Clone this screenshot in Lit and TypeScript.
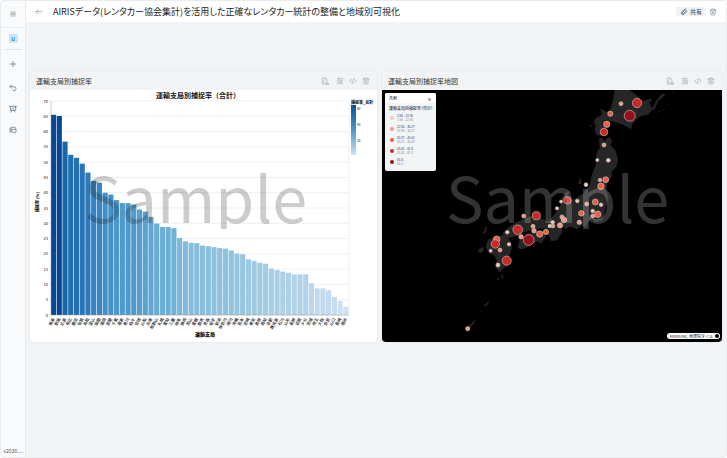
import { LitElement, html, svg, css } from "lit";
import { customElement } from "lit/decorators.js";

const FONT = css`"Noto Sans CJK JP", "Noto Sans", sans-serif`;

/* ---------- icons ---------- */
const glyphs = {
  menu: svg`<path d="M5 6h14M5 10h14M5 14h14M5 18h14"/>`,
  back: svg`<path d="M21 11H3M10 4l-7 7 7 7"/>`,
  plus: svg`<path d="M12 4v16M4 12h16"/>`,
  undo: svg`<path d="M8 3L3 8l5 5M3 8h12a6 6 0 0 1 0 12h-3"/>`,
  board: svg`<path d="M2 4h20M4 4v12h16V4M9 16l-3 5M15 16l3 5M8 12l3-3 2 2 3-3"/>`,
  chat: svg`<path d="M7 17H5l-2 2V9a5 5 0 0 1 5-5h8a5 5 0 0 1 5 5M9 10h10a2 2 0 0 1 2 2v5a2 2 0 0 1-2 2h-1v3l-4-3h-3a2 2 0 0 1-2-2zM6 8v4"/>`,
  link: svg`<path d="M20 11l-8 8a5 5 0 0 1-7-7l8-8a3.500 3.500 0 0 1 5 5l-8 8a1.500 1.500 0 0 1-3-3l7-7"/>`,
  trash: svg`<path d="M3 6h18M8 6V3h8v3M5 6l1 15h12l1-15M10 10v7M14 10v7"/>`,
  file: svg`<path d="M12 21H4V3h9l5 5v3M12 3v6M8 12v5M14 20l2-6h3l3 6zM14 21h8"/>`,
  list: svg`<path d="M4 5h16M4 10h16M4 15h16M4 20h16M9 3v4M15 13v4"/>`,
  code: svg`<path d="M7 7l-5 5 5 5M17 7l5 5-5 5M14 4l-4 16"/>`,
};
type Glyph = keyof typeof glyphs;
const icon = (name: Glyph) =>
  html`<svg class="icon" viewBox="0 0 24 24" aria-hidden="true">${glyphs[name]}</svg>`;

/* ---------- data ---------- */
const rates: [string, number][] = [
  ["徳島", 65.5], ["釧路", 65.1], ["広島", 56.7], ["帯広", 52.4], ["鹿児", 51.4], ["佐賀", 49.5],
  ["鳥取", 46.6], ["富山", 43.9], ["函館", 43.3], ["福岡", 40], ["室蘭", 39.4], ["千葉", 37.6],
  ["福島", 36.6], ["香川", 36.6], ["栃木", 36.1], ["宮城", 34.5], ["山梨", 33.8], ["兵庫", 32.1],
  ["和歌山", 29.9], ["札幌", 28.8], ["愛知", 28.8], ["三重", 28.4], ["岐阜", 25.2], ["静岡", 24.1],
  ["岡山", 23.6], ["愛媛", 23.5], ["群馬", 22.7], ["青森", 22.5], ["岩手", 22.2], ["新潟", 21.9],
  ["神奈川", 21.7], ["旭川", 21.1], ["沖縄", 20.1], ["熊本", 19.9], ["宮崎", 18.2], ["東京", 17.7],
  ["島根", 17.1], ["高知", 16.8], ["京都", 15.2], ["鹿児島", 14.7], ["石川", 14.2], ["山形", 13.8],
  ["長野", 13.3], ["滋賀", 13.3], ["大分", 13.3], ["茨城", 10.4], ["埼玉", 8.7], ["大阪", 8.7],
  ["奈良", 8.1], ["山口", 5.9], ["長崎", 4.6], ["福井", 2.7],
];

const ramp: [number, number[]][] = [
  [0, [214, 230, 244]], [10, [190, 216, 236]], [20, [150, 198, 224]], [28, [112, 177, 215]],
  [38, [74, 150, 201]], [47, [44, 122, 186]], [57, [23, 100, 171]], [65, [8, 72, 146]],
];
function shade(v: number) {
  for (let i = 1; i < ramp.length; i++) {
    const [hi, b] = ramp[i];
    const [lo, a] = ramp[i - 1];
    if (v <= hi) return `rgb(${a.map((c, k) => Math.round(c + ((b[k] - c) * (v - lo)) / (hi - lo))).join(",")})`;
  }
  return "rgb(8,72,146)";
}

/* x, y, radius, class index */
const spots: [number, number, number, number][] = [
  [621, 103.7, 2, 1], [637, 103, 4.7, 3], [629.7, 115.7, 5.5, 4], [610.3, 113.7, 2.6, 2], [606.7, 124.3, 3.2, 2],
  [604, 132, 3.8, 3], [604, 145, 2, 1], [597.3, 160, 1.5, 0], [608.3, 160.3, 1.9, 0], [600, 180, 1.8, 1],
  [605.7, 179.7, 3, 2], [601, 186.3, 3.3, 2], [586, 184.7, 1.9, 0], [567.3, 200.3, 3.8, 3], [561, 201.6, 1.5, 0],
  [577.3, 201, 1.8, 0], [586.7, 204, 2, 1], [595.3, 202, 3, 2], [601, 204.7, 1.8, 0], [581.3, 213.3, 2.8, 2],
  [592.7, 211, 1.8, 0], [592.7, 216, 2, 1], [597.7, 214.3, 3.3, 2], [579.3, 222.3, 2.2, 1], [557, 208.3, 1.6, 0],
  [523.7, 216, 2, 1], [536.3, 215.7, 4.1, 3], [552.7, 222.3, 1.8, 0], [549.7, 226, 1.7, 0], [553, 226, 1.9, 1],
  [562, 217, 2.1, 1], [564, 220, 2.8, 1], [560, 225.3, 2.6, 1], [533, 226.3, 2, 1], [534, 230.7, 2.3, 1],
  [539.7, 234, 3.2, 2], [546, 232, 2.7, 2], [517.7, 229.7, 4.8, 3], [507.3, 232.3, 1.8, 0], [521, 236.7, 2.2, 1],
  [528.7, 240, 5.4, 4], [496.7, 239.3, 3.3, 2], [495.3, 244, 4.2, 3], [509, 244.3, 1.7, 0], [490.7, 250.7, 1.5, 0],
  [500, 250, 2, 1], [506.7, 260.7, 4.6, 3], [498, 265, 2, 0], [467.7, 328.7, 2.1, 1],
];

const classes: [string, string][] = [
  ["2.66 - 22.90", "2.66 - 22.90"], ["22.90 - 30.27", "22.90 - 30.27"], ["30.27 - 45.02", "30.27 - 45.02"],
  ["45.02 - 61.3", "45.02 - 61.3"], ["61.3 -", "61.3 -"],
];

const land = [
  "M615 90L613 101 610 111 606 112 601 109 602 115 596 118 594 122 596 126 595 131 597 135 602 135 606 131 602 124 605 120 612 121 622 124 631 129 632 124 640 116 649 114 652 109 649 103 652 99 647 100 643 101 636 95 629 90Z",
  "M599 139L602 138 604 142 609 137 612 141 610 145 615 150 618 160 616 167 611 172 612 176 607 182 606 190 608 198 606 206 604 214 602 220 595 222 592 218 589 221 585 227 582 225 577 229 570 226 566 229 562 226 562 232 557 240 551 241 549 235 550 229 541 228 533 229 524 232 516 236 509 238 504 237 503 233 508 228 515 223 524 219 535 215 544 220 548 222 555 214 561 205 562 197 567 192 570 191 567 196 567 200 575 199 583 194 590 185 592 175 596 165 597 152 600 148Z",
  "M520 239L526 235 534 232 542 233 546 237 541 243 537 241 530 245 523 249 518 248Z",
  "M488 240L496 237 505 235 510 241 512 247 509 256 506 266 502 269 500 272 495 267 497 260 494 255 489 253 486 247Z",
  "M578 183l3-4v5zM579 181l2-3M652 109l5-9 5-6 3 1-7 6-4 9zM655 113l10-4M667 105l3-2M672 93l3-2M483 233l3-6 1-1-2 7zM478 250l5-3 1 3-4 3zM590 126l1-1v2zM497 279l2-1-1 2zM502 274l1 3-1 2zM484 306l5-5-2 4zM480 311l2-1M468 327l7-7-1 3-5 5z",
];

/* ---------- bar chart ---------- */
@customElement("rate-chart")
class RateChart extends LitElement {
  static styles = css`
    :host { display: block; background: #fff; }
    svg { display: block; width: 100%; height: auto; font-family: ${FONT}; fill: #111; }
    .grid { fill: none; stroke: #e6e6e6; stroke-width: 0.600; }
    .axis { fill: none; stroke: #999; stroke-width: 0.500; }
    .tick { font-size: 4px; text-anchor: end; }
    .name { font-size: 4px; text-anchor: end; font-weight: 500; }
    .key { font-size: 3px; }
    .bold { font-size: 4px; font-weight: 900; }
    .xname { font-size: 5px; font-weight: 900; text-anchor: middle; }
    .mid { text-anchor: middle; }
    .title { font-size: 7px; font-weight: 700; text-anchor: middle; }
    .mark { font-size: 63px; font-weight: 400; fill: #000; fill-opacity: 0.200; }
  `;
  render() {
    const pitch = 298 / rates.length;
    const y = (v: number) => 225 - (v * 214) / 70;
    const steps = Array.from({ length: 15 }, (_, i) => i * 5);
    return html`<svg viewBox="0 0 347 252" role="img" aria-label="運輸支局別捕捉率（合計）">
      <defs>
        <linearGradient id="scale" x2="0" y2="1">
          <stop offset="0" stop-color="#08519c"/><stop offset="0.500" stop-color="#4a98c9"/><stop offset="1" stop-color="#cfe3f3"/>
        </linearGradient>
        <clipPath id="band"><rect x="0" y="70" width="347" height="69"/></clipPath>
      </defs>
      ${steps.map((s) => svg`<path class="grid" d="M19 ${y(s)}H319"/><text class="tick" x="18" y=${y(s) + 1.5}>${s}</text>`)}
      <path class="grid" d="M319 11V225"/>
      ${rates.map(([name, v], i) => {
        const x = 21 + i * pitch;
        return svg`<rect x=${x} y=${y(v)} width=${pitch - 0.6} height=${225 - y(v)} fill=${shade(v)}/>
          <text class="name" transform="translate(${x + 4} 229) rotate(-60)">${name}</text>`;
      })}
      <path class="axis" d="M21 11V225H319"/>
      <text class="title" x="168" y="8">運輸支局別捕捉率（合計）</text>
      <text class="bold mid" transform="translate(9 112) rotate(-90)">捕捉率 (%)</text>
      <text class="xname" x="175" y="246">運輸支局</text>
      <text class="bold" x="321" y="14">捕捉率_合計</text>
      <rect x="321" y="15" width="5" height="50" fill="url(#scale)"/>
      <text class="key" x="327" y="20">60</text><text class="key" x="327" y="36">40</text><text class="key" x="327" y="52">20</text>
      <g clip-path="url(#band)"><text class="mark" x="54" y="133">Sample</text></g>
    </svg>`;
  }
}

/* ---------- bubble map ---------- */
@customElement("rate-map")
class RateMap extends LitElement {
  static styles = css`
    :host { display: block; position: relative; background: #000; font-family: ${FONT}; }
    .map { display: block; width: 100%; height: auto; }
    .land { fill: #262626; stroke: #303030; stroke-width: 0.400; }
    .spot { stroke: #d9c6c1; stroke-width: 0.600; }
    .c0 { fill: #f2c9bb; } .c1 { fill: #ee9b83; } .c2 { fill: #e65f48; } .c3 { fill: #c92a28; } .c4 { fill: #98101a; }
    .mark { font-family: ${FONT}; font-size: 63px; font-weight: 400; fill: #fff; fill-opacity: 0.200; }
    .legend { position: absolute; left: 3px; top: 3px; width: 51px; height: 78px; box-sizing: border-box;
      background: #f3f4f5; border-radius: 2px; color: #333; overflow: hidden; }
    .head { display: flex; justify-content: space-between; align-items: center; height: 10px; padding: 0 4px; background: #fff; font-size: 4px; font-weight: 500; }
    .close { border: 0; padding: 0; background: none; font: inherit; color: #333; font-size: 5px; line-height: 5px; }
    .sub { margin: 0; padding: 3px 4px 0; font-size: 4px; line-height: 5px; font-weight: 500; white-space: nowrap; font-feature-settings: "palt"; }
    ul { list-style: none; margin: 0; padding: 1px 4px 0; }
    li { display: flex; align-items: center; gap: 2px; height: 11px; }
    .dot { width: 6px; height: 6px; flex: none; }
    .range { display: flex; flex-direction: column; font-family: "Liberation Sans", sans-serif; font-size: 3px; line-height: 4px; white-space: nowrap; }
    .range small { font-size: 3px; color: #888; }
    .credit { position: absolute; right: 2px; bottom: 3px; height: 6px; display: flex; align-items: center; gap: 2px;
      padding: 0 1px 0 3px; background: #fff; border-radius: 3px; font-size: 4px; line-height: 6px; color: #222; text-decoration: none; white-space: nowrap; }
    .info { width: 4px; height: 4px; border-radius: 50%; background: #000; }
  `;
  render() {
    return html`<svg class="map" viewBox="382 90 340 252" role="img" aria-label="運輸支局別捕捉率地図">
        <defs><clipPath id="band"><rect x="382" y="160" width="340" height="69"/></clipPath></defs>
        ${land.map((d) => svg`<path class="land" d=${d}/>`)}
        ${spots.map(([x, y, r, c]) => svg`<circle class="spot c${c}" cx=${x} cy=${y} r=${r}/>`)}
        <g clip-path="url(#band)"><text class="mark" x="446" y="223">Sample</text></g>
      </svg>
      <section class="legend">
        <div class="head"><span>凡例</span><button class="close" aria-label="閉じる">×</button></div>
        <p class="sub">運輸支局別捕捉率（合計）</p>
        <ul>${classes.map(([a, b], i) => html`<li>
          <svg class="dot" viewBox="0 0 6 6"><circle class="c${i}" cx="3" cy="3" r="2"/></svg>
          <span class="range"><span>${a}</span><small>${b}</small></span></li>`)}</ul>
      </section>
      <a class="credit" href="#">MIERUNE, 地理院タイル<span class="info"></span></a>`;
  }
}

/* ---------- page ---------- */
@customElement("app-root")
class AppRoot extends LitElement {
  static styles = css`
    :host { display: block; font-family: ${FONT}; color: #222; }
    .frame { display: flex; box-sizing: border-box; min-height: 100vh; border: 1px solid #e9ebed; border-radius: 4px; background: #f2f3f5; overflow: hidden; }
    .icon { display: block; width: 8px; height: 8px; fill: none; stroke: currentColor; stroke-width: 2; stroke-linecap: round; stroke-linejoin: round; }
    button { border: 0; padding: 0; background: none; font: inherit; color: inherit; }
    .rail { width: 25px; flex: none; box-sizing: border-box; background: #f9fafb; border-right: 1px solid #e8eaed;
      display: flex; flex-direction: column; align-items: center; color: #536374; }
    .top { height: 26px; width: 100%; display: flex; align-items: center; justify-content: center; border-bottom: 1px solid #eceef0; color: #999; }
    .user { width: 17px; height: 21px; border-bottom: 1px solid #dfe4ea; display: flex; align-items: center; justify-content: center; }
    .avatar { width: 9px; height: 9px; border-radius: 1px; background: #cbe6f7; color: #1783c4; font-size: 5px; line-height: 9px; font-weight: 700; text-align: center; }
    .tools { display: flex; flex-direction: column; gap: 13px; padding-top: 10px; }
    .tools button:first-child { margin-bottom: 3px; }
    .version { margin-top: auto; padding-bottom: 3px; font-size: 5px; line-height: 7px; color: #555; }
    .main { flex: 1; min-width: 0; }
    .bar { display: flex; align-items: center; height: 21px; box-sizing: border-box; padding: 0 9px; background: #fff; color: #8a949e; }
    h1 { flex: 1; margin: 0 0 0 10px; font-size: 9px; line-height: 12px; font-weight: 400; color: #222; white-space: nowrap; font-feature-settings: "palt"; }
    .share { display: flex; align-items: center; gap: 2px; height: 9px; padding: 0 4px; margin-right: 3px; border-radius: 1px; background: #f0f2f4; font-size: 6px; line-height: 9px; font-weight: 500; color: #4c5967; }
    .grid { display: grid; grid-template-columns: 347fr 340fr; gap: 5px; padding: 49px 4px 0; align-items: start; }
    .card { min-width: 0; border-radius: 4px; overflow: hidden; box-shadow: 0 0 0 1px #eaecef; }
    .cap { display: flex; align-items: center; height: 19px; padding: 0 7px 0 6px; }
    h2 { flex: 1; margin: 0; font-size: 7px; line-height: 10px; font-weight: 400; color: #333; white-space: nowrap; }
    .acts { display: flex; gap: 5px; color: #a5adb6; }
    .acts button:first-child { margin-right: 2px; }
  `;
  private card(title: string, body: unknown) {
    const acts: [Glyph, string][] = [["file", "レポート"], ["list", "設定"], ["code", "コード"], ["trash", "削除"]];
    return html`<section class="card">
      <header class="cap"><h2>${title}</h2>
        <div class="acts">${acts.map(([g, label]) => html`<button aria-label=${label}>${icon(g)}</button>`)}</div>
      </header>${body}</section>`;
  }
  render() {
    const tools: [Glyph, string][] = [["plus", "追加"], ["undo", "元に戻す"], ["board", "ダッシュボード"], ["chat", "チャット"]];
    return html`<div class="frame">
      <nav class="rail">
        <div class="top"><button aria-label="メニュー">${icon("menu")}</button></div>
        <div class="user"><button class="avatar">U</button></div>
        <div class="tools">${tools.map(([g, label]) => html`<button aria-label=${label}>${icon(g)}</button>`)}</div>
        <span class="version">v2026…</span>
      </nav>
      <main class="main">
        <header class="bar">
          <button aria-label="戻る">${icon("back")}</button>
          <h1>AIRISデータ(レンタカー協会集計)を活用した正確なレンタカー統計の整備と地域別可視化</h1>
          <button class="share">${icon("link")}共有</button>
          <button aria-label="削除">${icon("trash")}</button>
        </header>
        <div class="grid">
          ${this.card("運輸支局別捕捉率", html`<rate-chart></rate-chart>`)}
          ${this.card("運輸支局別捕捉率地図", html`<rate-map></rate-map>`)}
        </div>
      </main>
    </div>`;
  }
}
